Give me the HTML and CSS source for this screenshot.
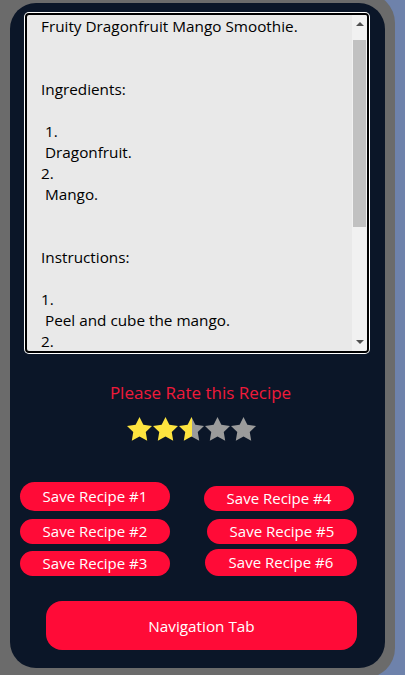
FILE: index.html
```html
<!DOCTYPE html>
<html lang="en">
<head>
<meta charset="utf-8">
<title>Recipe</title>
<link rel="stylesheet" href="styles.css">
</head>
<body>
<div class="phone">
  <div class="screen">
    <div class="recipe-box">
      <div class="recipe-text">Fruity Dragonfruit Mango Smoothie.


Ingredients:

 1.
 Dragonfruit.
2.
 Mango.


Instructions:

1.
 Peel and cube the mango.
2.</div>
      <div class="scrollbar">
        <div class="arrow arrow-up"></div>
        <div class="thumb"></div>
        <div class="arrow arrow-down"></div>
      </div>
    </div>

    <div class="rate-title">Please Rate this Recipe</div>

    <div class="stars">
      <svg class="star" viewBox="2 2 20 19.3" preserveAspectRatio="none"><path class="full" d="M12 2l3.09 6.26L22 9.27l-5 4.87 1.18 6.88L12 17.77l-6.18 3.25L7 14.14 2 9.27l6.91-1.01L12 2z"/></svg>
      <svg class="star" viewBox="2 2 20 19.3" preserveAspectRatio="none"><path class="full" d="M12 2l3.09 6.26L22 9.27l-5 4.87 1.18 6.88L12 17.77l-6.18 3.25L7 14.14 2 9.27l6.91-1.01L12 2z"/></svg>
      <svg class="star" viewBox="2 2 20 19.3" preserveAspectRatio="none"><defs><linearGradient id="half" x1="0" x2="1" y1="0" y2="0"><stop offset="0.5" stop-color="#fde43f"/><stop offset="0.5" stop-color="#9b9b9b"/></linearGradient></defs><path fill="url(#half)" d="M12 2l3.09 6.26L22 9.27l-5 4.87 1.18 6.88L12 17.77l-6.18 3.25L7 14.14 2 9.27l6.91-1.01L12 2z"/></svg>
      <svg class="star" viewBox="2 2 20 19.3" preserveAspectRatio="none"><path class="empty" d="M12 2l3.09 6.26L22 9.27l-5 4.87 1.18 6.88L12 17.77l-6.18 3.25L7 14.14 2 9.27l6.91-1.01L12 2z"/></svg>
      <svg class="star" viewBox="2 2 20 19.3" preserveAspectRatio="none"><path class="empty" d="M12 2l3.09 6.26L22 9.27l-5 4.87 1.18 6.88L12 17.77l-6.18 3.25L7 14.14 2 9.27l6.91-1.01L12 2z"/></svg>
    </div>

    <div class="save-grid">
      <div class="save-col">
        <button class="save-btn btn-1">Save Recipe #1</button>
        <button class="save-btn btn-2">Save Recipe #2</button>
        <button class="save-btn btn-3">Save Recipe #3</button>
      </div>
      <div class="save-col">
        <button class="save-btn btn-4">Save Recipe #4</button>
        <button class="save-btn btn-5">Save Recipe #5</button>
        <button class="save-btn btn-6">Save Recipe #6</button>
      </div>
    </div>

    <button class="nav-btn">Navigation Tab</button>
  </div>
</div>
</body>
</html>
```

FILE: styles.css
```css
html, body {
  margin: 0;
  padding: 0;
}
body {
  background: #6e82ab;
  width: 405px;
  height: 675px;
  overflow: hidden;
  font-family: "Open Sans", "Noto Sans", sans-serif;
}
.phone {
  box-sizing: border-box;
  width: 395px;
  margin-top: -7px;
  padding: 10px;
  background: #6b6b6b;
  border-radius: 0 30px 30px 0;
}
.screen {
  box-sizing: border-box;
  height: 665px;
  background: #0b1628;
  border-radius: 26px;
  display: flex;
  flex-direction: column;
  overflow: hidden;
}
.recipe-box {
  box-sizing: border-box;
  margin: 10px 0 0 15px;
  width: 344px;
  height: 340px;
  border: 2px solid #000;
  border-radius: 4px;
  box-shadow: 0 0 0 1px #fff;
  background: #e9e9e9;
  display: flex;
  overflow: hidden;
}
.recipe-text {
  flex: 1;
  padding: 1px 0 0 14px;
  white-space: pre;
  font-size: 15.3px;
  line-height: 21px;
  color: #000;
  overflow: hidden;
}
.scrollbar {
  width: 15px;
  background: #f1f1f1;
  display: flex;
  flex-direction: column;
  align-items: center;
}
.arrow {
  width: 0;
  height: 0;
  border-left: 4px solid transparent;
  border-right: 4px solid transparent;
}
.arrow-up {
  margin-top: 7px;
  border-bottom: 4px solid #505050;
}
.arrow-down {
  margin-top: auto;
  margin-bottom: 7px;
  border-top: 4px solid #505050;
}
.thumb {
  width: 13px;
  height: 187px;
  margin-top: 14px;
  background: #c1c1c1;
}
.rate-title {
  margin-top: 28px;
  text-align: center;
  padding-left: 6px;
  color: #f01a3a;
  font-size: 17px;
  line-height: 24px;
}
.stars {
  margin: 12px 0 0 117px;
  display: flex;
  gap: 1px;
}
.star {
  width: 25px;
  height: 24px;
}
.star .full { fill: #fde43f; }
.star .empty { fill: #9b9b9b; }
.save-grid {
  margin-top: 41px;
  display: flex;
  padding-left: 10px;
}
.save-col {
  display: flex;
  flex-direction: column;
}
.save-col + .save-col {
  margin-left: 34px;
}
.save-btn {
  box-sizing: border-box;
  width: 150px;
  height: 25px;
  padding: 0;
  border: none;
  border-radius: 13px;
  background: #ff0b37;
  color: #fff;
  font-family: "Open Sans", "Noto Sans", sans-serif;
  font-size: 15px;
  line-height: 25px;
}
.btn-1 { height: 29px; border-radius: 15px; }
.btn-2 { margin-top: 8px; }
.btn-3 { margin-top: 7px; }
.btn-4 { margin-top: 4px; }
.btn-5 { margin-top: 8px; margin-left: 3px; }
.btn-6 { margin-top: 5px; margin-left: 1px; width: 152px; height: 27px; border-radius: 14px; }
.nav-btn {
  box-sizing: border-box;
  margin: 25px 0 0 36px;
  width: 311px;
  height: 49px;
  border: none;
  border-radius: 16px;
  background: #ff0b37;
  color: #fff;
  font-family: "Open Sans", "Noto Sans", sans-serif;
  font-size: 15.3px;
}
```
